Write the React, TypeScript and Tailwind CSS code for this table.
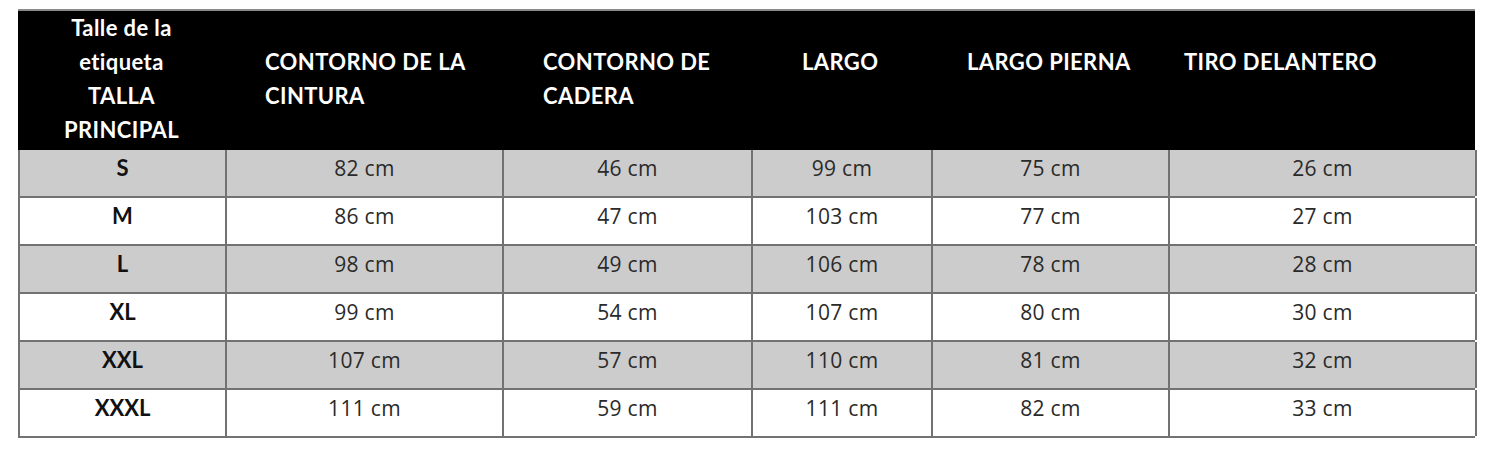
import React from 'react';

type Row = {
  size: string;
  cintura: string;
  cadera: string;
  largo: string;
  pierna: string;
  tiro: string;
};

const rows: Row[] = [
  { size: 'S', cintura: '82 cm', cadera: '46 cm', largo: '99 cm', pierna: '75 cm', tiro: '26 cm' },
  { size: 'M', cintura: '86 cm', cadera: '47 cm', largo: '103 cm', pierna: '77 cm', tiro: '27 cm' },
  { size: 'L', cintura: '98 cm', cadera: '49 cm', largo: '106 cm', pierna: '78 cm', tiro: '28 cm' },
  { size: 'XL', cintura: '99 cm', cadera: '54 cm', largo: '107 cm', pierna: '80 cm', tiro: '30 cm' },
  { size: 'XXL', cintura: '107 cm', cadera: '57 cm', largo: '110 cm', pierna: '81 cm', tiro: '32 cm' },
  { size: 'XXXL', cintura: '111 cm', cadera: '59 cm', largo: '111 cm', pierna: '82 cm', tiro: '33 cm' },
];

const cols = 'grid grid-cols-[207px_277px_249px_180px_237px_307px]';

export default function App() {
  return (
    <div className="w-[1500px] h-[455px] bg-white pt-[9px] pl-[18px] font-['Lato',sans-serif]">
      <div className="w-[1457px] border-t-2 border-[#8a8a8a]">
        {/* Header */}
        <div className={`${cols} h-[139px] bg-black text-white font-bold text-[22px] leading-[34px] tracking-[0.4px]`}>
          <div className="text-center">
            Talle de la
            <br />
            etiqueta
            <br />
            TALLA
            <br />
            PRINCIPAL
          </div>
          <div className="pt-[34px] pl-[40px]">
            CONTORNO DE LA
            <br />
            CINTURA
          </div>
          <div className="pt-[34px] pl-[41px]">
            CONTORNO DE
            <br />
            CADERA
          </div>
          <div className="pt-[34px] pl-[51px]">LARGO</div>
          <div className="pt-[34px] pl-[36px]">LARGO PIERNA</div>
          <div className="pt-[34px] pl-[16px]">TIRO DELANTERO</div>
        </div>

        {/* Body */}
        <div className="border-l-2 border-[#727272]">
          {rows.map((r, i) => (
            <div
              key={r.size}
              className={`${cols} h-[48px] border-b-2 border-[#727272] text-[21px] leading-[36px] tracking-[0.3px] text-[#2a2a2a] font-['Open_Sans',sans-serif] ${
                i % 2 === 0 ? 'bg-[#cccccc]' : 'bg-white'
              }`}
            >
              <div className="text-center font-bold font-['Lato',sans-serif] text-[22px] text-[#111] tracking-[0px] border-r-2 border-[#727272]">
                {r.size}
              </div>
              <div className="text-center border-r-2 border-[#727272]">{r.cintura}</div>
              <div className="text-center border-r-2 border-[#727272]">{r.cadera}</div>
              <div className="text-center border-r-2 border-[#727272]">{r.largo}</div>
              <div className="text-center border-r-2 border-[#727272]">{r.pierna}</div>
              <div className="text-center border-r-2 border-[#727272]">{r.tiro}</div>
            </div>
          ))}
        </div>
      </div>
    </div>
  );
}
